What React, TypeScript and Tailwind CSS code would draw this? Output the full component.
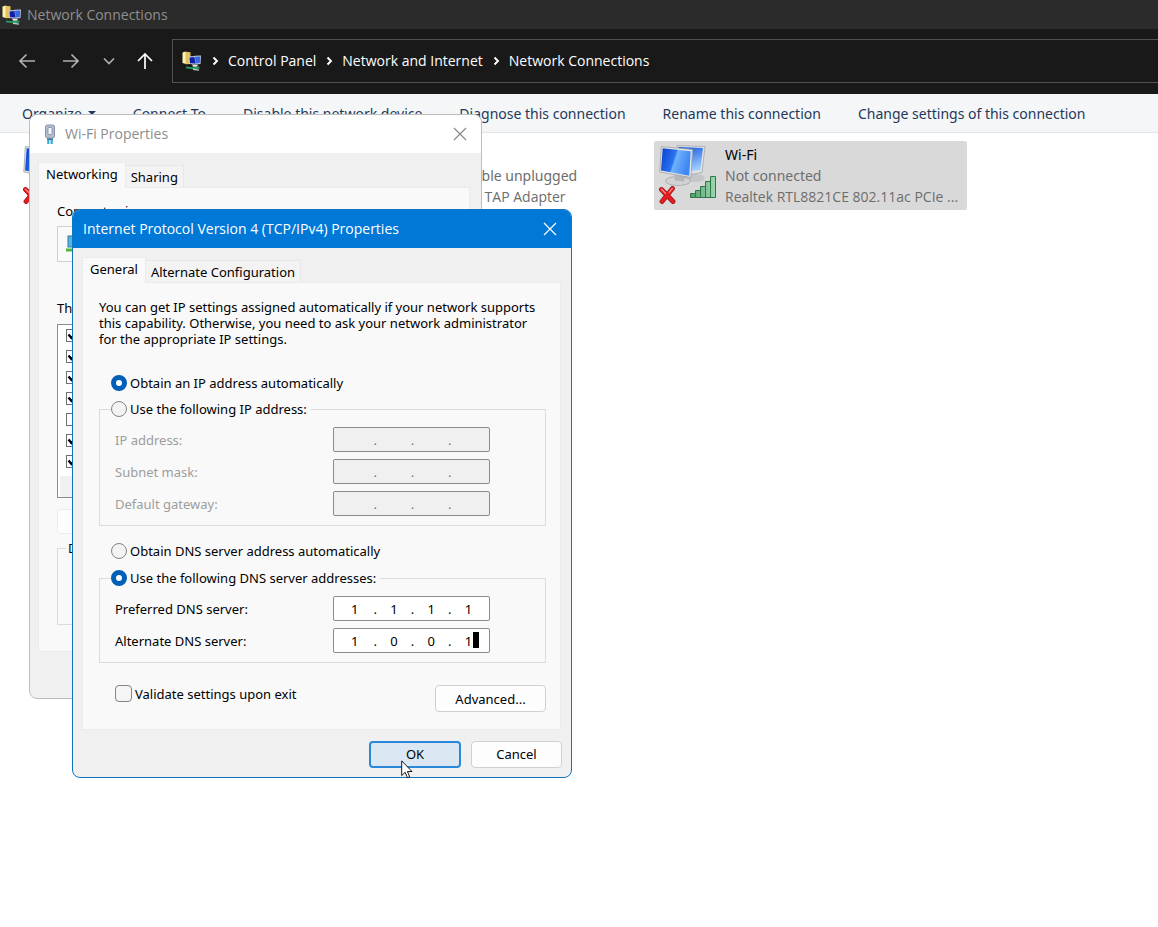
import { useState } from "react";
import type { ReactNode } from "react";

const commands = [
  "Connect To",
  "Disable this network device",
  "Diagnose this connection",
  "Rename this connection",
  "Change settings of this connection",
];

const crumbs = ["Control Panel", "Network and Internet", "Network Connections"];

const adapterItems = [
  { name: "Client for Microsoft Networks", on: true },
  { name: "File and Printer Sharing", on: true },
  { name: "QoS Packet Scheduler", on: true },
  { name: "Internet Protocol Version 4", on: true },
  { name: "Network Adapter Multiplexor", on: false },
  { name: "LLDP Protocol Driver", on: true },
  { name: "Internet Protocol Version 6", on: true },
];

function FolderNetIcon() {
  return (
    <svg viewBox="0 0 20 20" className="h-5 w-5 shrink-0">
      <path d="M.5 1.500 4 .5v12.500l-3.500-1z" fill="#fff0b0" />
      <path d="M3.500 .8 8.500 1.200v11.800l-5 .3z" fill="#e3c25c" />
      <path d="M6.500 5.500 13 5l.5 8.500-6.500-.5z" fill="#c9d3e2" />
      <path d="m12.500 4.800 6.500-.4-.5 8.600-5 .5z" fill="#b9c6dd" />
      <path d="m7.500 6.500 5-.4.8 6.400-5.300-.2z" fill="#101fa8" />
      <path d="m13 5.800 5.200-.3-.4 6.500-4.300.5z" fill="#3868e0" />
      <path d="m10 13.500 6 .3-1 2h-4z" fill="#dfe3e8" />
      <path d="M4 16.300c5 1.200 9 .9 13.500 .2" stroke="#25a060" strokeWidth="1.800" fill="none" />
      <path d="m11 18.300 6 .8" stroke="#b8cfc4" strokeWidth="1.400" />
    </svg>
  );
}

function RedCross() {
  return (
    <svg viewBox="0 0 18 18" className="absolute -left-px bottom-0 h-[18px] w-[18px]">
      <path d="m3.500 3.500 11.500 12M14.500 2.500 4 15.500" stroke="#8f1414" strokeWidth="4.800" strokeLinecap="round" />
      <path d="m3.500 3.500 11.500 12M14.500 2.500 4 15.500" stroke="#e51c1f" strokeWidth="3.600" strokeLinecap="round" />
      <path d="m3.500 3.200 4 4M14.300 2.500l-3 3.700" stroke="#ff8a8a" strokeWidth="1.300" strokeLinecap="round" />
    </svg>
  );
}

function AdapterIcon({ signal }: { signal?: boolean }) {
  return (
    <div className="relative h-[60px] w-[58px] shrink-0">
      <svg viewBox="0 0 58 60" className="h-[60px] w-[58px]">
        <defs>
          <linearGradient id="front" x1="0" y1="0" x2="1" y2="0.300">
            <stop offset="0" stopColor="#0b3fd0" />
            <stop offset="0.500" stopColor="#2a74ee" />
            <stop offset="0.560" stopColor="#6fb2fb" />
            <stop offset="1" stopColor="#3f88f2" />
          </linearGradient>
          <linearGradient id="back" x1="0" y1="0" x2="0.300" y2="1">
            <stop offset="0" stopColor="#1554d8" />
            <stop offset="1" stopColor="#9cccff" />
          </linearGradient>
          <linearGradient id="bars" x1="0" y1="0" x2="1" y2="0">
            <stop offset="0" stopColor="#4f9d6c" />
            <stop offset="1" stopColor="#9fd8b0" />
          </linearGradient>
        </defs>
        <ellipse cx="36" cy="34" rx="10" ry="4" fill="#c4c6c8" />
        <path d="m18 1.500 28 1-3 26L22 32z" fill="#e0e3e6" stroke="#a3a7ab" strokeWidth="0.800" />
        <path d="m19.500 3 24.500 1-2.700 22L22 28z" fill="url(#back)" />
        <ellipse cx="19" cy="37" rx="12.500" ry="4.500" fill="#d0d2d4" stroke="#a2a5a8" strokeWidth="0.800" />
        <path d="m15 28 12 1-2 8.500-9-1z" fill="#b4b7ba" />
        <path d="M2.300 2.500 33.500 5.500l-1.500 28L.8 28z" fill="#e3e6e8" stroke="#9da1a5" strokeWidth="0.800" />
        <path d="m3.700 4.200 28 3-1.500 24.500L2 26.500z" fill="url(#front)" />
        {signal && (
          <g fill="url(#bars)" stroke="#2d7748" strokeWidth="1">
            <path d="M31.500 49.500h5v4h-5zM36.500 46.500h5v7h-5zM41.500 42.500h5v11h-5zM46.500 37.500h5v16h-5zM51.500 32.500h5v21h-5z" />
          </g>
        )}
      </svg>
      <RedCross />
    </div>
  );
}

function CloseIcon({ className }: { className: string }) {
  return (
    <svg viewBox="0 0 14 14" className={`h-3.5 w-3.5 ${className}`} fill="none" stroke="currentColor" strokeWidth="1.200">
      <path d="m1 1 12 12M13 1 1 13" />
    </svg>
  );
}

function PlugIcon() {
  return (
    <svg viewBox="0 0 12 20" className="h-5 w-3">
      <rect x="1.500" y="1" width="9" height="13" rx="2" fill="#b4bed3" stroke="#8791a8" />
      <rect x="4" y="3.500" width="4" height="7" rx="1" fill="#f5f7fb" stroke="#7e8799" strokeWidth="0.800" />
      <path d="M3 14.500h6v1.500H3z" fill="#26647f" />
      <path d="M4.300 15.500V20M7.700 15.500V20" stroke="#32aee0" strokeWidth="2.200" />
    </svg>
  );
}

function Connection({ name, status, device, selected, signal }: {
  name: string;
  status: string;
  device: string;
  selected?: boolean;
  signal?: boolean;
}) {
  return (
    <div className={`flex h-[69px] w-[313px] shrink-0 gap-2 rounded-xs pl-[5px] pt-[3px] ${selected ? "bg-[#d9d9d9]" : ""}`}>
      <AdapterIcon signal={signal} />
      <div className="min-w-0 whitespace-nowrap font-['Noto_Sans',sans-serif] text-[14px] leading-[21px] text-[#6d6d6d]">
        <p className="text-black">{name}</p>
        <p>{status}</p>
        <p className="font-['Open_Sans',sans-serif]">{device}</p>
      </div>
    </div>
  );
}

function Explorer() {
  return (
    <>
      <header className="flex h-[29px] items-center gap-[5px] bg-[#2b2b2b] pl-0.5 text-[14px] text-[#8f8f8f]">
        <FolderNetIcon />
        <h1>Network Connections</h1>
      </header>

      <nav className="flex h-[65px] items-center bg-[#191919] pb-0.5 text-white">
        <div className="flex shrink-0 items-center pl-[18px]">
          <button aria-label="Back" className="mr-[26px] text-[#b0b0b0]">
            <svg viewBox="0 0 18 18" className="h-[18px] w-[18px]" fill="none" stroke="currentColor" strokeWidth="1.700">
              <path d="M17 9H2M8.500 2.500 2 9l6.500 6.500" />
            </svg>
          </button>
          <button aria-label="Forward" className="mr-[23px] text-[#b0b0b0]">
            <svg viewBox="0 0 18 18" className="h-[18px] w-[18px]" fill="none" stroke="currentColor" strokeWidth="1.700">
              <path d="M1 9h15M9.500 2.500 16 9l-6.500 6.500" />
            </svg>
          </button>
          <button aria-label="Recent locations" className="mr-[21px] text-[#b0b0b0]">
            <svg viewBox="0 0 12 12" className="h-3 w-3" fill="none" stroke="currentColor" strokeWidth="1.700">
              <path d="m1 3.500 5 5 5-5" />
            </svg>
          </button>
          <button aria-label="Up" className="mr-[18px]">
            <svg viewBox="0 0 18 18" className="h-[18px] w-[18px]" fill="none" stroke="currentColor" strokeWidth="1.700">
              <path d="M9 17V2M2 9l7-7 7 7" />
            </svg>
          </button>
        </div>
        <div className="flex h-11 flex-1 items-center border border-r-0 border-[#525252] pl-[9px] text-[14px]">
          <FolderNetIcon />
          {crumbs.map((crumb) => (
            <div key={crumb} className="flex items-center">
              <svg viewBox="0 0 8 10" className="mx-[9px] h-2.5 w-2" fill="none" stroke="currentColor" strokeWidth="1.900">
                <path d="m2.500 1.500 3.500 3.500-3.500 3.500" />
              </svg>
              <a href="#">{crumb}</a>
            </div>
          ))}
        </div>
      </nav>

      <div className="flex h-[39px] items-center gap-[37px] overflow-hidden whitespace-nowrap border-b border-[#e3e6e8] bg-[#f5f6f7] pl-[22px] font-['Noto_Sans',sans-serif] text-[14px] text-[#1e395b]">
        <button className="flex items-center gap-1.5">
          Organize
          <svg viewBox="0 0 8 4" className="h-1 w-2" fill="currentColor">
            <path d="M0 0h8L4 4z" />
          </svg>
        </button>
        {commands.map((command) => (
          <button key={command}>{command}</button>
        ))}
      </div>

      <main className="flex gap-[5px] overflow-hidden pl-[18px] pt-2">
        <Connection name="Ethernet" status="Network cable unplugged" device="Realtek PCIe GbE" />
        <Connection name="Local Area" status="Network cable unplugged" device="Unshielded TAP Adapter" />
        <Connection name="Wi-Fi" status="Not connected" device="Realtek RTL8821CE 802.11ac PCIe ..." selected signal />
      </main>
    </>
  );
}

function DialogTabs({ first, second }: { first: string; second: string }) {
  return (
    <div role="tablist" className="flex items-end pt-[9px]">
      <button role="tab" aria-selected="true" className="relative -mb-px h-[26px] border border-b-0 border-[#ebebeb] bg-[#f9f9f9] px-[7px] pb-1 leading-4">
        {first}
      </button>
      <button role="tab" aria-selected="false" className="h-[22px] border border-b-0 border-l-0 border-[#e8e8e8] bg-[#f3f3f3] px-[5px] leading-4">
        {second}
      </button>
    </div>
  );
}

function WifiDialog() {
  return (
    <section
      aria-label="Wi-Fi Properties"
      className="absolute left-[29px] top-[114px] w-[453px] rounded-lg border border-[#bdbdbd] bg-[#f0f0f0] font-['Noto_Sans',sans-serif] text-[13px] text-black"
    >
      <div className="flex h-[38px] items-center rounded-t-lg bg-white pl-3.5 pr-3.5 font-['Open_Sans',sans-serif] text-[14px] text-[#8d8d8d]">
        <PlugIcon />
        <h2 className="ml-[9px] flex-1 pb-0.5">Wi-Fi Properties</h2>
        <button aria-label="Close Wi-Fi Properties">
          <CloseIcon className="text-[#8a8a8a]" />
        </button>
      </div>
      <div className="pb-[46px] pl-2 pr-[11px]">
        <DialogTabs first="Networking" second="Sharing" />
        <div className="border border-[#ebebeb] bg-[#f9f9f9] px-[18px] pb-[26px] pt-[15px] leading-4">
          <p>Connect using:</p>
          <div className="mt-[7px] flex h-9 items-center border border-[#d0d0d0] pl-2">
            <svg viewBox="0 0 20 20" className="h-5 w-5">
              <rect x="2" y="2" width="15" height="11" fill="#55b5e8" stroke="#2e7ca8" />
              <path d="M0 16h18" stroke="#52b43c" strokeWidth="3" />
            </svg>
          </div>
          <p className="mt-[38px]">This connection uses the following items:</p>
          <div className="mt-2 h-[174px] border border-[#8d8d8d] bg-white">
            {adapterItems.map((item) => (
              <div key={item.name} className="flex h-[21px] items-center pl-2">
                <input
                  type="checkbox"
                  aria-label={item.name}
                  defaultChecked={item.on}
                  className="peer h-[13px] w-[13px] appearance-none border border-[#707070] bg-white"
                />
                <svg viewBox="0 0 13 13" className="pointer-events-none invisible -ml-[13px] h-[13px] w-[13px] peer-checked:visible" fill="none" stroke="#000" strokeWidth="2.400">
                  <path d="m2.500 5.500 3 3.500L11 3.500" />
                </svg>
              </div>
            ))}
            <div className="ml-0.5 mt-1 h-[21px] bg-[#f0f0f0]" />
          </div>
          <div className="mt-[11px] h-[25px] w-[110px] rounded border border-[#ececec] bg-[#fdfdfd]" />
          <fieldset className="mt-1.5 h-[85px] border border-[#dcdcdc]">
            <legend className="ml-2 px-0.5">Description</legend>
          </fieldset>
        </div>
      </div>
    </section>
  );
}

function IpField({ id, label, octets, disabled, caret }: {
  id: string;
  label: string;
  octets: string[];
  disabled?: boolean;
  caret?: boolean;
}) {
  return (
    <div className="grid grid-cols-[218px_157px] items-center">
      <label htmlFor={`${id}-0`} className={disabled ? "text-[#9d9d9d]" : ""}>{label}</label>
      <div className={`relative flex h-[25px] items-center rounded-xs border border-[#8c8c8c] pl-0.5 pr-1 ${disabled ? "bg-[#f0f0f0] text-[#777]" : "bg-white"}`}>
        {octets.map((octet, idx) => (
          <div key={idx} className="flex min-w-0 flex-1 items-center">
            {idx > 0 && <span className="w-1 text-center">.</span>}
            <input
              id={`${id}-${idx}`}
              aria-label={idx > 0 ? `${label} part ${idx + 1}` : undefined}
              defaultValue={octet}
              disabled={disabled}
              maxLength={3}
              className="w-0 min-w-0 flex-1 bg-transparent text-center outline-none"
            />
          </div>
        ))}
        {caret && <span className="absolute right-2.5 top-[3px] h-4 w-1.5 bg-black" />}
      </div>
    </div>
  );
}

function Radio({ name, checked, onChange, children }: {
  name: string;
  checked: boolean;
  onChange: () => void;
  children: ReactNode;
}) {
  return (
    <label className="flex h-4 items-center gap-[3px]">
      <input
        type="radio"
        name={name}
        checked={checked}
        onChange={onChange}
        className="h-4 w-4 appearance-none rounded-full border border-[#858585] bg-[#f3f3f3] checked:border-[5px] checked:border-[#005fb8] checked:bg-white"
      />
      {children}
    </label>
  );
}

function Ipv4Dialog() {
  const [manualIp, setManualIp] = useState(false);
  const [manualDns, setManualDns] = useState(true);
  const empty = ["", "", "", ""];

  return (
    <section
      aria-label="Internet Protocol Version 4 (TCP/IPv4) Properties"
      className="absolute left-[72px] top-[209px] w-[500px] rounded-lg border border-[#0f75bd] bg-[#f0f0f0] font-['Noto_Sans',sans-serif] text-[13px] text-black"
    >
      <div className="flex h-[38px] items-center justify-between rounded-t-[7px] bg-[#0078d7] pl-2.5 pr-3.5 font-['Open_Sans',sans-serif] text-[14px] text-white">
        <h2 className="pb-0.5">Internet Protocol Version 4 (TCP/IPv4) Properties</h2>
        <button aria-label="Close">
          <CloseIcon className="text-white" />
        </button>
      </div>

      <div className="pl-[9px] pr-2.5">
        <DialogTabs first="General" second="Alternate Configuration" />
        <div className="border border-[#ebebeb] bg-[#f9f9f9] pb-[17px] pl-4 pr-3.5 pt-4 leading-4">
          <p>
            You can get IP settings assigned automatically if your network supports
            <br />
            this capability. Otherwise, you need to ask your network administrator
            <br />
            for the appropriate IP settings.
          </p>

          <div className="mt-7 pl-3">
            <Radio name="ip" checked={!manualIp} onChange={() => setManualIp(false)}>
              Obtain an IP address automatically
            </Radio>
          </div>
          <fieldset className="mt-2.5 border border-[#dcdcdc] pb-[9px]">
            <legend className="ml-[11px] pr-1">
              <Radio name="ip" checked={manualIp} onChange={() => setManualIp(true)}>
                Use the following IP address:
              </Radio>
            </legend>
            <div className="flex flex-col gap-[7px] pl-[15px] pt-2.5">
              <IpField id="ip" label="IP address:" octets={empty} disabled={!manualIp} />
              <IpField id="mask" label="Subnet mask:" octets={empty} disabled={!manualIp} />
              <IpField id="gateway" label="Default gateway:" octets={empty} disabled={!manualIp} />
            </div>
          </fieldset>

          <div className="mt-[17px] pl-3">
            <Radio name="dns" checked={!manualDns} onChange={() => setManualDns(false)}>
              Obtain DNS server address automatically
            </Radio>
          </div>
          <fieldset className="mt-[11px] border border-[#dcdcdc] pb-[9px]">
            <legend className="ml-[11px] pr-1">
              <Radio name="dns" checked={manualDns} onChange={() => setManualDns(true)}>
                Use the following DNS server addresses:
              </Radio>
            </legend>
            <div className="flex flex-col gap-[7px] pl-[15px] pt-2.5">
              <IpField id="dns1" label="Preferred DNS server:" octets={["1", "1", "1", "1"]} />
              <IpField id="dns2" label="Alternate DNS server:" octets={["1", "0", "0", "1"]} caret />
            </div>
          </fieldset>

          <div className="mt-[22px] flex items-start justify-between pl-4">
            <label className="flex items-center gap-[3px]">
              <input type="checkbox" className="h-[17px] w-[17px] appearance-none rounded border border-[#858585] bg-[#f5f5f5]" />
              Validate settings upon exit
            </label>
            <button className="h-[27px] w-[111px] rounded border border-[#d0d0d0] bg-[#fdfdfd]">Advanced...</button>
          </div>
        </div>
      </div>

      <div className="flex justify-end gap-2.5 pb-[9px] pr-[9px] pt-[11px]">
        <button className="relative h-[27px] w-[92px] rounded border-2 border-[#2b88d8] bg-[#dbe7f3]">
          OK
          <svg viewBox="0 0 12 19" className="absolute left-[30px] top-[17px] h-[19px] w-3">
            <path d="M.7.900v14.600l3.400-3.200 2.300 5.400 2.300-1-2.300-5.200h4.600z" fill="#fff" stroke="#000" strokeWidth="0.900" />
          </svg>
        </button>
        <button className="h-[27px] w-[91px] rounded border border-[#d0d0d0] bg-[#fdfdfd]">Cancel</button>
      </div>
    </section>
  );
}

export default function App() {
  return (
    <div className="relative min-h-screen overflow-hidden bg-white font-['Open_Sans',sans-serif]">
      <Explorer />
      <WifiDialog />
      <Ipv4Dialog />
    </div>
  );
}
